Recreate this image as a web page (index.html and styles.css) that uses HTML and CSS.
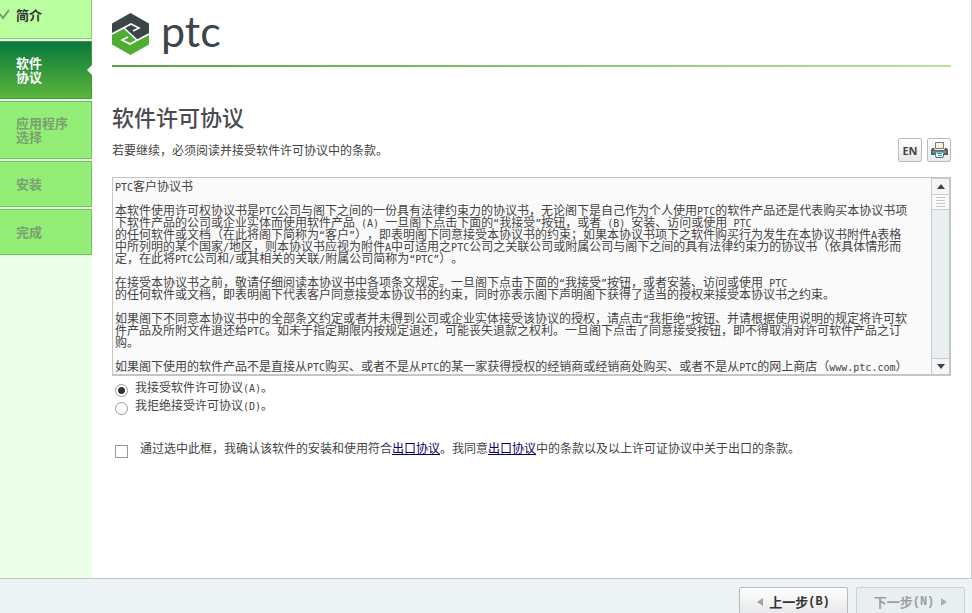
FILE: index.html
```html
<!DOCTYPE html>
<html lang="zh-CN">
<head>
    <meta charset="UTF-8">
    <title>软件许可协议</title>
    <link rel="stylesheet" href="styles.css">
</head>
<body>
<div class="box">

    <!--左侧步骤-->
    <ol class="steps">
        <li class="done">
            <svg class="tick" viewBox="0 0 10 12" width="10" height="12"><path d="M0 6l3 4 6-8" fill="none" stroke="#7d9a74" stroke-width="2"/></svg>
            简介
        </li>
        <li class="on">软件<br>协议</li>
        <li>应用程序<br>选择</li>
        <li>安装</li>
        <li>完成</li>
    </ol>

    <!--内容部分-->
    <main class="main">
        <header class="logo">
            <svg viewBox="0 0 37 42" width="37" height="42">
                <path d="M18.500 0L37 10.500V21L25 27 12 15 0 21V10.500z" fill="#3c4649"/>
                <path d="M18.500 42L0 31.500V21L12 15 25 27 37 21V31.500z" fill="#4fae32"/>
                <path d="M0 21L19 11 27 15 21 18M37 21L18 31 10 27 16 24M12 15L25 27" fill="none" stroke="#fff" stroke-width="1.600"/>
            </svg>
            <span>ptc</span>
        </header>

        <h1>软件许可协议</h1>
        <div class="intro">
            <p>若要继续，必须阅读并接受软件许可协议中的条款。</p>
            <div class="tools">
                <button type="button">EN</button>
                <button type="button" aria-label="打印">
                    <svg viewBox="0 0 17 16" width="17" height="16">
                        <path d="M4.500 .5h8v6h-8z" fill="#fbf0cf" stroke="#777"/>
                        <path d="M1 6h2l1 2h9l1-2h2l1 2v5H0V8z" fill="#596169"/>
                        <path d="M2 9h13v2H2z" fill="#8b949b"/>
                        <path d="M4 10h9l-1 5.500H5z" fill="#fff" stroke="#39727d"/>
                        <path d="M6 11h5v1H6zM7 13h4v1H7z" fill="#25a3b1"/>
                    </svg>
                </button>
            </div>
        </div>

        <!--协议正文-->
        <div class="license">
            <div class="text">
                <p><i>PTC</i>客户协议书</p>
                <p>本软件使用许可权协议书是<i>PTC</i>公司与阁下之间的一份具有法律约束力的协议书，无论阁下是自己作为个人使用<i>PTC</i>的软件产品还是代表购买本协议书项下软件产品的公司或企业实体而使用软件产品<i> (A) </i>一旦阁下点击下面的<i>“</i>我接受<i>”</i>按钮，或者<i> (B) </i>安装、访问或使用<i> PTC</i><br>的任何软件或文档（在此将阁下简称为<i>“</i>客户<i>”</i>），即表明阁下同意接受本协议书的约束；如果本协议书项下之软件购买行为发生在本协议书附件<i>A</i>表格中所列明的某个国家<i>/</i>地区，则本协议书应视为附件<i>A</i>中可适用之<i>PTC</i>公司之关联公司或附属公司与阁下之间的具有法律约束力的协议书（依具体情形而定，在此将<i>PTC</i>公司和<i>/</i>或其相关的关联<i>/</i>附属公司简称为<i>“PTC”</i>）。</p>
                <p>在接受本协议书之前，敬请仔细阅读本协议书中各项条文规定。一旦阁下点击下面的<i>“</i>我接受<i>”</i>按钮，或者安装、访问或使用<i> PTC</i><br>的任何软件或文档，即表明阁下代表客户同意接受本协议书的约束，同时亦表示阁下声明阁下获得了适当的授权来接受本协议书之约束。</p>
                <p>如果阁下不同意本协议书中的全部条文约定或者并未得到公司或企业实体接受该协议的授权，请点击<i>“</i>我拒绝<i>”</i>按钮、并请根据使用说明的规定将许可软件产品及所附文件退还给<i>PTC</i>。如未于指定期限内按规定退还，可能丧失退款之权利。一旦阁下点击了同意接受按钮，即不得取消对许可软件产品之订购。</p>
                <p>如果阁下使用的软件产品不是直接从<i>PTC</i>购买、或者不是从<i>PTC</i>的某一家获得授权的经销商或经销商处购买、或者不是从<i>PTC</i>的网上商店（<i>www.ptc.com</i>）</p>
            </div>
            <div class="scroll">
                <button type="button" class="up" aria-label="向上"></button>
                <div class="thumb"></div>
                <button type="button" class="down" aria-label="向下"></button>
            </div>
        </div>

        <!--选项-->
        <form>
            <div class="row">
                <input type="radio" name="license" id="accept" checked>
                <label for="accept">我接受软件许可协议<i>(A)</i>。</label>
            </div>
            <div class="row">
                <input type="radio" name="license" id="reject">
                <label for="reject">我拒绝接受许可协议<i>(D)</i>。</label>
            </div>
            <div class="row export">
                <input type="checkbox" id="export">
                <label for="export">通过选中此框，我确认该软件的安装和使用符合<a href="#">出口协议</a>。我同意<a href="#">出口协议</a>中的条款以及以上许可证协议中关于出口的条款。</label>
            </div>
        </form>
    </main>
</div>

<!--底部按钮-->
<footer class="btn">
    <button type="button"><span class="left"></span>上一步<b>(B)</b></button>
    <button type="button" disabled>下一步<b>(N)</b><span class="right"></span></button>
</footer>
</body>
</html>
```

FILE: styles.css
```css
*{
    margin: 0;
    padding: 0;
    box-sizing: border-box;
}
body{
    display: flex;
    flex-direction: column;
    height: 100vh;
    overflow: hidden;
    background: #fff;
    color: #444;
    font: 12px/18px "Noto Sans CJK SC", sans-serif;
    text-spacing-trim: space-all;
}
button{
    font-family: inherit;
    cursor: pointer;
}
/*半角字符*/
i{
    font: 10px/0 "DejaVu Sans Mono", monospace;
    white-space: pre-wrap;
}
.box{
    display: flex;
    flex: 1;
    min-height: 0;
    border-right: 1px solid #c9cdd0;
}

/*步骤*/
.steps{
    display: flex;
    flex-direction: column;
    gap: 2px;
    width: 92px;
    flex-shrink: 0;
    background: #edfeea;
    list-style: none;
}
.steps li{
    position: relative;
    padding: 14px 0 14px 16px;
    border: 1px solid #74bd62;
    border-left: 0;
    background: #92ee76;
    color: #7aa16e;
    font-size: 13px;
    font-weight: bold;
    line-height: 14px;
}
.steps li:nth-child(n+4){
    padding-top: 15px;
    padding-bottom: 15px;
}
.steps li.done{
    padding-top: 8px;
    padding-bottom: 16px;
    border-top: 0;
    background: #b9ff9f;
    border-color: #8fcb7c;
    color: #333;
}
.steps li.on{
    border-color: #3f9a3c;
    background: linear-gradient(#08783d, #5cb53b);
    color: #fff;
}
.steps li.on::after{
    content: "";
    position: absolute;
    right: -1px;
    top: 50%;
    margin-top: -5px;
    border: 5px solid transparent;
    border-right-color: #fff;
    border-left: 0;
}
.tick{
    position: absolute;
    left: 0;
    top: 8px;
}

/*内容*/
.main{
    flex: 1;
    padding: 13px 20px 0;
}
.logo{
    display: flex;
    gap: 12px;
    height: 54px;
    border-bottom: 2px solid;
    border-image: linear-gradient(90deg, #58a342, #b9e39a) 1;
}
.logo span{
    color: #3c4649;
    font: 43px/36px Lato, sans-serif;
}
h1{
    margin-top: 34px;
    color: #4a4a4f;
    font-size: 22px;
    font-weight: 500;
    line-height: 30px;
}
.intro{
    display: flex;
    justify-content: space-between;
    align-items: center;
    margin-top: 7px;
}
.tools{
    display: flex;
    gap: 5px;
}
.tools button{
    display: flex;
    justify-content: center;
    align-items: center;
    width: 24px;
    height: 24px;
    border: 1px solid #bcbcbc;
    border-radius: 2px;
    background: linear-gradient(#fff, #e9e9ec);
    color: #444;
    font: bold 11px "Noto Sans", sans-serif;
}
.license{
    display: flex;
    margin-top: 15px;
    border: 1px solid #c3c5c6;
    border-right-width: 2px;
    border-bottom-width: 2px;
    background: #fafafa;
}
.text{
    flex: 1;
    padding: 2px 22px 2px 2px;
    line-height: 12px;
}
.text p + p{
    margin-top: 12px;
}
.scroll{
    display: flex;
    flex-direction: column;
    width: 18px;
    border: 1px solid #c9cdd0;
    border-width: 1px 0 0 1px;
    background: #e9eef1;
}
.scroll button{
    display: flex;
    justify-content: center;
    align-items: center;
    height: 16px;
    border: 0;
    border-bottom: 1px solid #c9cdd0;
    background: #f4f5f6;
}
.scroll .down{
    margin-top: auto;
    border-top: 1px solid #c9cdd0;
    border-bottom: 0;
}
.scroll button::before{
    content: "";
    border: 4px solid transparent;
}
.scroll .up::before{
    border-bottom: 5px solid #444;
    border-top: 0;
}
.scroll .down::before{
    border-top: 5px solid #444;
    border-bottom: 0;
}
.thumb{
    height: 15px;
    padding: 2px 4px;
    border-bottom: 1px solid #c9cdd0;
    background: repeating-linear-gradient(#c3c7c9 0 1px, #fafafa 1px 3px) content-box, #fafafa;
}

/*选项*/
.row{
    display: flex;
    align-items: flex-start;
    gap: 7px;
    height: 18px;
    padding-left: 3px;
}
form{
    margin-top: 2px;
}
.row input{
    appearance: none;
    flex-shrink: 0;
    width: 13px;
    height: 13px;
    margin-top: 6px;
    border: 1px solid #999;
    background: #fff;
}
.row input[type=radio]{
    border-radius: 50%;
}
.row input[type=radio]:checked{
    background: radial-gradient(#333 3px, #fff 4px);
}
.export{
    gap: 12px;
    margin-top: 25px;
}
.row a{
    color: #000066;
}

/*底部*/
.btn{
    display: flex;
    justify-content: flex-end;
    gap: 8px;
    height: 35px;
    flex-shrink: 0;
    padding: 8px 7px 0;
    border-top: 1px solid #bfc8cb;
    background: #edf2f4;
}
.btn button{
    display: flex;
    justify-content: center;
    align-items: center;
    width: 109px;
    height: 29px;
    border: 1px solid #b5babd;
    border-radius: 2px;
    background: linear-gradient(#fff, #e6e7e9);
    color: #333;
    font-size: 13px;
    font-weight: bold;
}
.btn b{
    font: bold 12px "Liberation Mono", monospace;
}
.btn button:disabled{
    border-color: #cdd3d7;
    background: #e9eef1;
    color: #9a9fa3;
}
.btn span{
    border: 4px solid transparent;
}
.btn .left{
    margin-right: 6px;
    border-right: 6px solid #a3a795;
    border-left: 0;
}
.btn .right{
    margin-left: 7px;
    border-left: 6px solid #a9b0b0;
    border-right: 0;
}
```
